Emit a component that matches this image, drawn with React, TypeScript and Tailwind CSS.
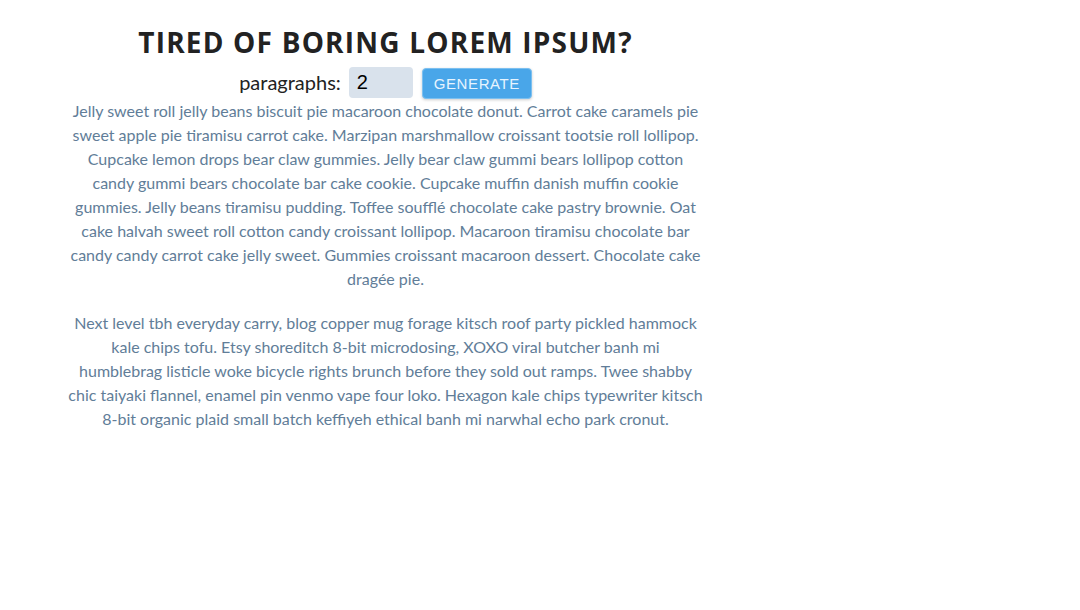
import { useState } from "react";

const text = [
  "Jelly sweet roll jelly beans biscuit pie macaroon chocolate donut. Carrot cake caramels pie sweet apple pie tiramisu carrot cake. Marzipan marshmallow croissant tootsie roll lollipop. Cupcake lemon drops bear claw gummies. Jelly bear claw gummi bears lollipop cotton candy gummi bears chocolate bar cake cookie. Cupcake muffin danish muffin cookie gummies. Jelly beans tiramisu pudding. Toffee soufflé chocolate cake pastry brownie. Oat cake halvah sweet roll cotton candy croissant lollipop. Macaroon tiramisu chocolate bar candy candy carrot cake jelly sweet. Gummies croissant macaroon dessert. Chocolate cake dragée pie.",
  "Next level tbh everyday carry, blog copper mug forage kitsch roof party pickled hammock kale chips tofu. Etsy shoreditch 8-bit microdosing, XOXO viral butcher banh mi humblebrag listicle woke bicycle rights brunch before they sold out ramps. Twee shabby chic taiyaki flannel, enamel pin venmo vape four loko. Hexagon kale chips typewriter kitsch 8-bit organic plaid small batch keffiyeh ethical banh mi narwhal echo park cronut.",
];

export default function App() {
  const [count, setCount] = useState(2);

  return (
    <section className="ml-[68px] w-[635px] pt-[22px] text-center font-['Lato','Noto_Sans',sans-serif]">

      {/* TITLE */}
      <h3 className="text-[28px] leading-[40px] font-bold uppercase tracking-[1.2px] text-[#222222] font-['Open_Sans',sans-serif]">
        tired of boring lorem ipsum?
      </h3>

      {/* FORM */}
      <form
        className="mt-[5px] flex items-start justify-center"
        onSubmit={(e) => e.preventDefault()}
      >
        <label htmlFor="amount" className="text-[20px] leading-[31px] text-[#222222] mr-[8px]">
          paragraphs:
        </label>
        <input
          id="amount"
          type="number"
          value={count}
          onChange={(e) => setCount(Number(e.target.value))}
          className="w-[64px] h-[31px] rounded-[4px] bg-[#d9e2ec] px-[8px] text-[20px] text-black font-['Liberation_Sans',sans-serif] outline-none"
        />
        <button
          type="submit"
          className="ml-[9px] mt-[1px] w-[110px] h-[31px] pt-[1px] rounded-[4px] border border-[#7cc0f0] bg-[#49a6e9] text-[15px] tracking-[0.6px] text-[#e6f4ff] uppercase shadow-[0_1px_3px_rgba(0,0,0,0.2)] font-['Liberation_Sans',sans-serif]"
        >
          generate
        </button>
      </form>

      {/* TEXT */}
      <article>
        {text.slice(0, count).map((p, i) => (
          <p key={i} className="mb-[20px] text-[16px] leading-[24px] text-[#617d98]">
            {p}
          </p>
        ))}
      </article>

    </section>
  );
}
